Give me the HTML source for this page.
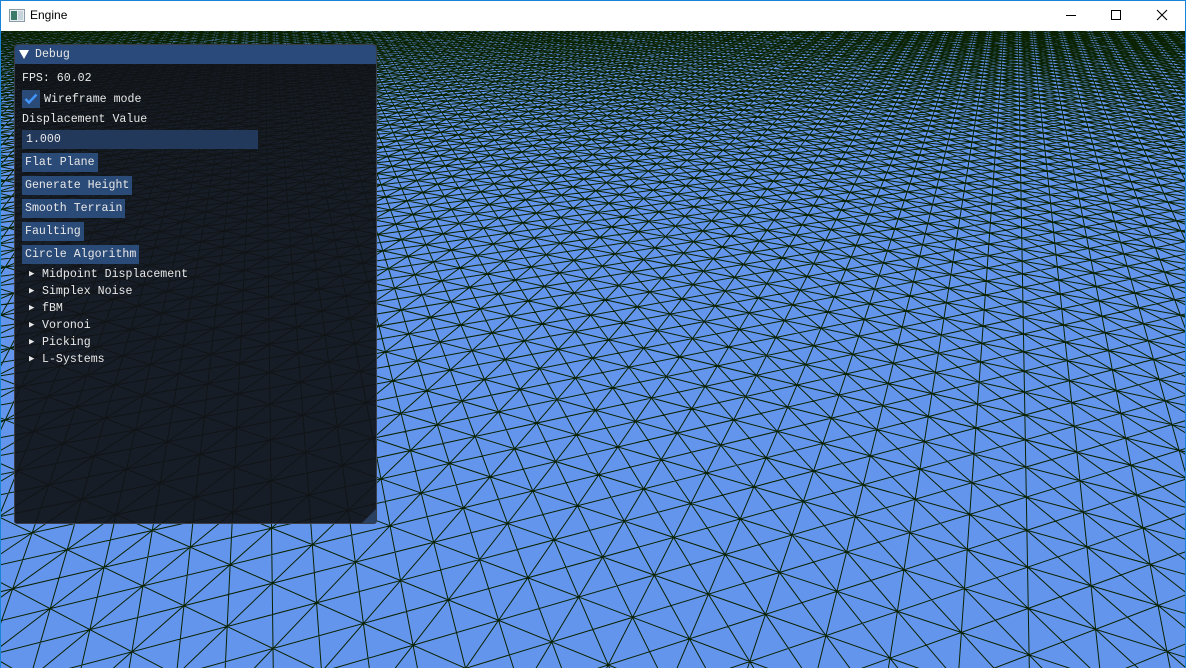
<!DOCTYPE html>
<html><head><meta charset="utf-8"><style>
html,body{margin:0;padding:0;width:1186px;height:668px;overflow:hidden;background:#fff;font-family:"Liberation Sans",sans-serif}
#frame{position:absolute;left:0;top:0;width:1184px;height:667px;border:1px solid #1883d7;border-bottom:none}
#tb{position:absolute;left:0;top:0;width:1186px;height:31px;background:#fff}
#tb .t{position:absolute;left:30px;top:8px;font-size:12px;color:#000}
#vp{position:absolute;left:1px;top:31px;width:1184px;height:637px;background:#6495ed;overflow:hidden}
#panel{position:absolute;left:14px;top:44px;width:363px;height:480px;background:rgba(17,19,24,0.93);border:1px solid #3a3e48;border-radius:4px 4px 3px 3px;box-sizing:border-box;font-family:"Liberation Mono",monospace;font-size:11.6px;color:#e8e8e8;overflow:hidden}
.hd{position:absolute;left:0;top:0;right:0;height:19px;background:#294a7a}
.a{position:absolute;white-space:pre}
.btn{position:absolute;left:7px;height:19px;background:#2a4a78;line-height:20px;padding:0 3px;white-space:pre}
</style></head><body>
<div id="vp"><svg id="g" width="1184" height="637" xmlns="http://www.w3.org/2000/svg"></svg></div>
<div id="tb">
<svg style="position:absolute;left:9px;top:9px" width="16" height="13"><rect x="0.5" y="0.5" width="15" height="12" fill="#e8eef2" stroke="#8a9aa8"/><rect x="2" y="2" width="6" height="9" fill="#3c7a6a"/><rect x="9" y="2" width="5" height="9" fill="#c8d4dc"/></svg>
<span class="t">Engine</span>
<svg style="position:absolute;left:1064px;top:9px" width="110" height="14"><line x1="2" y1="6.5" x2="12" y2="6.5" stroke="#000"/><rect x="47.5" y="1.5" width="9" height="9" fill="none" stroke="#000"/><path d="M93 1L103 11M103 1L93 11" stroke="#000" stroke-width="1.1"/></svg>
</div>
<div id="frame"></div>
<div id="panel">
<div class="hd"></div>
<svg class="a" style="left:4px;top:5px" width="10" height="9"><path d="M0 0H10L5 9Z" fill="#fff"/></svg>
<div class="a" style="left:20px;top:3px">Debug</div>
<div class="a" style="left:7px;top:27px">FPS: 60.02</div>
<div class="a" style="left:7px;top:45px;width:18px;height:18px;background:#2a4a78"></div>
<svg class="a" style="left:9px;top:48px" width="14" height="12"><path d="M1.5 6L5 9.5L12.5 1.5" fill="none" stroke="#4296fa" stroke-width="2.4"/></svg>
<div class="a" style="left:29px;top:48px">Wireframe mode</div>
<div class="a" style="left:7px;top:68px">Displacement Value</div>
<div class="a" style="left:7px;top:85px;width:236px;height:19px;background:#23395c"></div>
<div class="a" style="left:11px;top:88px">1.000</div>
<div class="btn" style="top:108px">Flat Plane</div>
<div class="btn" style="top:131px">Generate Height</div>
<div class="btn" style="top:154px">Smooth Terrain</div>
<div class="btn" style="top:177px">Faulting</div>
<div class="btn" style="top:200px">Circle Algorithm</div>
<div class="a" style="left:14px;top:224px;font-size:9px">&#9654;</div><div class="a" style="left:27px;top:223px">Midpoint Displacement</div>
<div class="a" style="left:14px;top:241px;font-size:9px">&#9654;</div><div class="a" style="left:27px;top:240px">Simplex Noise</div>
<div class="a" style="left:14px;top:258px;font-size:9px">&#9654;</div><div class="a" style="left:27px;top:257px">fBM</div>
<div class="a" style="left:14px;top:275px;font-size:9px">&#9654;</div><div class="a" style="left:27px;top:274px">Voronoi</div>
<div class="a" style="left:14px;top:292px;font-size:9px">&#9654;</div><div class="a" style="left:27px;top:291px">Picking</div>
<div class="a" style="left:14px;top:309px;font-size:9px">&#9654;</div><div class="a" style="left:27px;top:308px">L-Systems</div>
<svg class="a" style="right:0;bottom:0" width="14" height="14"><path d="M14 0V14H0Z" fill="#2a4060"/></svg>
</div>
<script>
(function(){
var f=768,cx=592,cy=318.5,h=15,th=Math.atan(0.625),ct=Math.cos(th),st=Math.sin(th);
var ph=20*Math.PI/180,cp=Math.cos(ph),sp=Math.sin(ph);
function w(u,v){var X=u*cp-v*sp,Z=u*sp+v*cp;return [X,Z*ct+h*st,h*ct-Z*st];}
var out=[],NEAR=0.5,FAR=115;
function lerp(a,b,t){return [a[0]+t*(b[0]-a[0]),a[1]+t*(b[1]-a[1]),a[2]+t*(b[2]-a[2])];}
function seg(u1,v1,u2,v2){
 var a=w(u1,v1),b=w(u2,v2);
 if(a[1]>b[1]){var c=a;a=b;b=c;}
 if(b[1]<NEAR||a[1]>FAR)return;
 if(a[1]<NEAR)a=lerp(a,b,(NEAR-a[1])/(b[1]-a[1]));
 if(b[1]>FAR)b=lerp(a,b,(FAR-a[1])/(b[1]-a[1]));
 var x1=cx+f*a[0]/a[1],y1=cy+f*a[2]/a[1],x2=cx+f*b[0]/b[1],y2=cy+f*b[2]/b[1];
 if(Math.max(x1,x2)<-5||Math.min(x1,x2)>1190||Math.max(y1,y2)<-3)return;
 out.push('M'+x1.toFixed(1)+' '+y1.toFixed(1)+'L'+x2.toFixed(1)+' '+y2.toFixed(1));
}
var R=200;
for(var i=-R;i<=R;i++){seg(i,-R,i,R);seg(-R,i,R,i);}
for(var k=-2*R;k<=2*R;k+=2){
 var u1=Math.max(-R,k-R),u2=Math.min(R,k+R);
 if(u1<u2){seg(u1,k-u1,u2,k-u2);seg(u1,u1-k,u2,u2-k);}
}
document.getElementById('g').innerHTML='<path d="'+out.join('')+'" fill="none" stroke="#0a2200" stroke-width="1"/>';
})();
</script>
</body></html>
